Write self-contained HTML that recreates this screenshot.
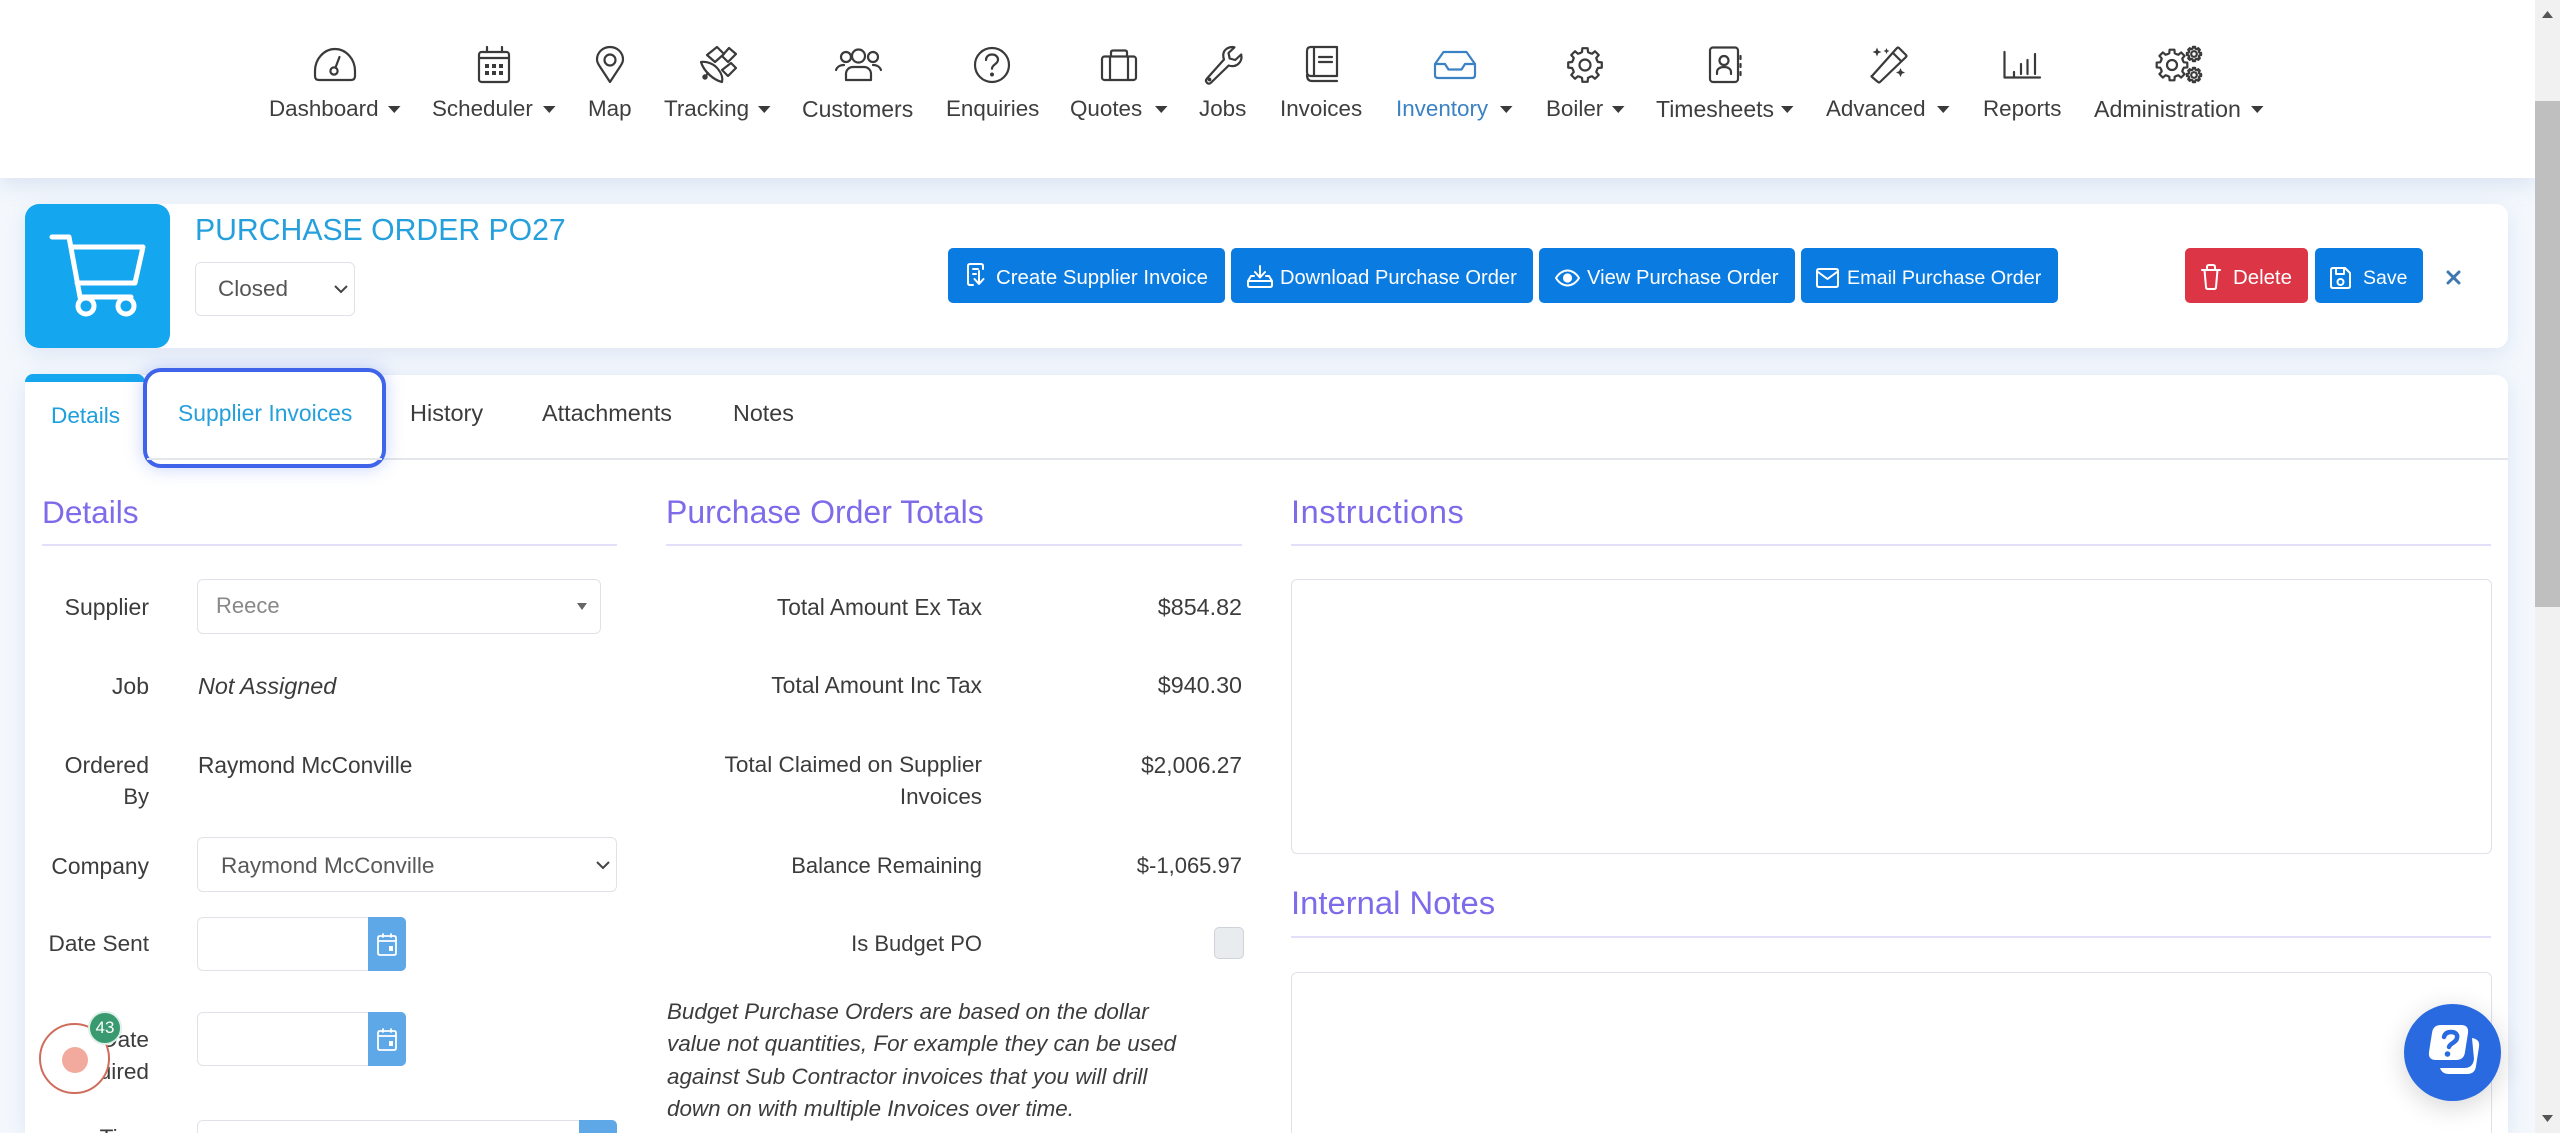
<!DOCTYPE html>
<html><head><meta charset="utf-8"><title>Purchase Order PO27</title>
<style>
html,body{margin:0;padding:0;width:2560px;height:1133px;overflow:hidden;background:#f4f8fd;font-family:"Liberation Sans",sans-serif}
#w{position:absolute;left:0;top:0;width:2560px;height:1133px;overflow:hidden;background:#f4f8fd}
.a{position:absolute}
.t{position:absolute;white-space:nowrap;font:22.6px/30px "Liberation Sans",sans-serif;color:#3c3c3c}
.r{text-align:right}
.n{top:94px;color:#3e3e3e;font-size:22.4px}
.nb{color:#3b82c4}
.h{font-size:31.6px;line-height:40px;color:#7d6bea;top:492px}
.u{position:absolute;height:2px;background:#e3dff9}
.box{position:absolute;background:#fff;border:1.5px solid #dfe3e9;border-radius:6px;box-sizing:border-box}
.btn{position:absolute;top:248px;height:55px;border-radius:5px;background:#0a7be0}
.bt{position:absolute;white-space:nowrap;top:263px;font:20.4px/30px "Liberation Sans",sans-serif;color:#fff}
.cal{position:absolute;background:#5fa8e8;border-radius:0 5px 5px 0}
svg{position:absolute;overflow:visible}
</style></head><body><div id="w">

<!-- NAV -->
<div class="a" style="left:0;top:0;width:2535px;height:178px;background:#fff;box-shadow:0 5px 22px rgba(110,140,190,.22)"></div>

<svg style="left:0;top:0" width="2560" height="178" fill="none" stroke="#3a3a3a" stroke-width="2.2" stroke-linecap="round" stroke-linejoin="round">
<defs>
<g id="gear"><g id="q"><polyline id="th" vector-effect="non-scaling-stroke" points="70.2,-29.1 76,-17.5 98.8,-15.6 98.8,15.6 76,17.5 70.2,29.1"/><use href="#th" transform="rotate(45)"/></g><use href="#q" transform="rotate(90)"/><use href="#q" transform="rotate(180)"/><use href="#q" transform="rotate(270)"/></g>
</defs>
<!-- dashboard -->
<path d="M319 80h32q4 0 4-4v-5c0-12-9-22-20-22s-20 10-20 22v5q0 4 4 4z"/><circle cx="334" cy="71" r="3.6"/><path d="M335.5 67.5L339.5 57"/>
<!-- scheduler -->
<rect x="479" y="52" width="30" height="30" rx="2.5"/><path d="M487 47v5M502 47v5M479 58h30"/>
<g fill="#3a3a3a" stroke="none"><rect x="485" y="64" width="4" height="4"/><rect x="492" y="64" width="4" height="4"/><rect x="499" y="64" width="4" height="4"/><rect x="485" y="71" width="4" height="4"/><rect x="492" y="71" width="4" height="4"/><rect x="499" y="71" width="4" height="4"/></g>
<!-- map -->
<path d="M610 82L599.5 66c-1.8-2.7-2.5-4.5-2.5-6.5C597 52.500 602.800 47 610 47s13 5.500 13 12.500c0 2-.7 3.800-2.500 6.500z"/><circle cx="610" cy="60" r="5.500"/>
<!-- tracking satellite -->
<path d="M707 55l10-8 7 7-9 8zM722 56l7-8 7 6-8 8zM731 63l5 5-8 8-6-6zM701 62c6-1 13 2 17 7s5 9 4 13c-8-2-18-10-21-20zM708 73l-3 4"/><circle cx="705" cy="77" r="1.6" fill="#3a3a3a"/>
<!-- customers -->
<circle cx="846" cy="57" r="5"/><circle cx="858.500" cy="56" r="6.500"/><circle cx="873" cy="57" r="5"/>
<path d="M836 70c1-3 4-5 8-5M881 70c-1-3-4-5-8-5M846 80v-6c0-4 3-7 7-7h11c4 0 7 3 7 7v6z"/>
<!-- enquiries -->
<circle cx="992" cy="65" r="17"/><path d="M986 60c0-3.500 2.700-5.500 6-5.500s6 2 6 5.200c0 4.500-6 4.500-6 9"/><circle cx="992" cy="74.500" r=".9" fill="#3a3a3a"/>
<!-- quotes -->
<rect x="1102" y="56.500" width="34" height="23.500" rx="2.500"/><path d="M1111 56.500V52.500q0-2 2-2h12q2 0 2 2v4M1110 56.500V80M1128 56.500V80"/>
<!-- jobs wrench -->
<path d="M1207 78.500l17-19c-1.800-5.500 0-9 3-11 2.500-1.500 5-1.800 7.500-1.200l-6 5.700 1.200 5.500 5.500 1.500 6-5.500c.8 3.500 0 7-3 9.500-2.800 2.300-6 2.700-9.500 1.500l-17.500 17c-1.500 1.500-3 1.500-4.200.3-1.300-1.200-1.300-2.800 0-4.300z"/><circle cx="1209.500" cy="79.500" r=".8" fill="#3a3a3a"/>
<!-- invoices book -->
<path d="M1337 47v29h-26q-4 0-4-4V51q0-4 4-4zM1314 47v29M1307 75q0 6 5 6h25M1319 57h13M1319 62h13"/>
<!-- inventory -->
<g stroke="#3b82c4"><path d="M1435 64l8.500-12h23l8.500 12v11q0 3-3 3h-34q-3 0-3-3zM1435 64h10l3.500 5.500h13l3.500-5.500h10"/></g>
<!-- boiler -->
<use href="#gear" transform="translate(1585 65) scale(.17)"/><circle cx="1585" cy="65" r="5.500"/>
<!-- timesheets -->
<rect x="1710" y="47.500" width="28" height="34.500" rx="3"/><circle cx="1724" cy="60.500" r="4.500"/><path d="M1717 74v-2c0-3 3-5 7-5s7 2 7 5v2M1740.500 56v3M1740.500 64v3M1740.500 72v3" />
<!-- advanced wand -->
<path d="M1872 76l25-28q1-1 2 0l7 7q1 1 0 2l-26 25q-1 1-2 0l-6-5q-1-1 0-1zM1893 53l8 8"/>
<g fill="#3a3a3a" stroke="none"><path d="M1877 47.500l1.300 3.200 3.200 1.300-3.200 1.300-1.300 3.200-1.300-3.200-3.200-1.300 3.200-1.300zM1886.500 48l.9 2.100 2.100.9-2.100.9-.9 2.100-.9-2.100-2.100-.9 2.100-.9zM1900.500 68l1.400 3.100 3.100 1.400-3.100 1.400-1.400 3.100-1.400-3.100-3.100-1.400 3.100-1.400z"/></g>
<!-- reports -->
<path d="M2004.500 52v25.500h35.500M2014 72v5M2021 64v10M2027.500 60v14M2035 54v20"/>
<!-- administration -->
<use href="#gear" transform="translate(2172 65) scale(.155)"/><circle cx="2172" cy="65" r="5"/>
<use href="#gear" transform="translate(2194 54) scale(.072)"/><circle cx="2194" cy="54" r="2.800"/>
<use href="#gear" transform="translate(2194 75) scale(.072)"/><circle cx="2194" cy="75" r="2.800"/>
<!-- carets -->
<g fill="#3a3a3a" stroke="none">
<path d="M388 106h12.500l-6.250 7z"/><path d="M543 106h12.500l-6.250 7z"/><path d="M758 106h12.500l-6.250 7z"/><path d="M1155 106h12.500l-6.250 7z"/>
<path d="M1500 106h12.500l-6.250 7z"/><path d="M1612 106h12.500l-6.250 7z"/><path d="M1781 106h12.500l-6.250 7z"/><path d="M1937 106h12.500l-6.250 7z"/><path d="M2251 106h12.500l-6.250 7z"/>
</g>
</svg>

<div class="t n" style="left:269px">Dashboard</div>
<div class="t n" style="left:432px">Scheduler</div>
<div class="t n" style="left:588px">Map</div>
<div class="t n" style="left:664px">Tracking</div>
<div class="t n" style="left:802px;font-size:23px">Customers</div>
<div class="t n" style="left:946px">Enquiries</div>
<div class="t n" style="left:1070px">Quotes</div>
<div class="t n" style="left:1199px">Jobs</div>
<div class="t n" style="left:1280px">Invoices</div>
<div class="t n nb" style="left:1396px">Inventory</div>
<div class="t n" style="left:1546px">Boiler</div>
<div class="t n" style="left:1656px;font-size:23px">Timesheets</div>
<div class="t n" style="left:1826px">Advanced</div>
<div class="t n" style="left:1983px">Reports</div>
<div class="t n" style="left:2094px;font-size:23.2px">Administration</div>

<!-- HEADER CARD -->
<div class="a" style="left:25px;top:204px;width:2483px;height:144px;background:#fff;border-radius:12px;box-shadow:0 6px 22px rgba(120,150,200,.18)"></div>
<div class="a" style="left:25px;top:204px;width:145px;height:144px;background:#14a6ef;border-radius:14px"></div>
<svg style="left:25px;top:204px" width="145" height="144" fill="none" stroke="#fff" stroke-width="5" stroke-linecap="round" stroke-linejoin="round">
<path d="M27 33H44L55 93H106M46 43H118L110 79H52"/>
<circle cx="61" cy="102" r="8"/><circle cx="101" cy="102" r="8"/>
</svg>
<div class="t" style="left:195px;top:211px;font-size:30.2px;line-height:40px;color:#25a0dc">PURCHASE ORDER PO27</div>
<div class="box" style="left:195px;top:262px;width:160px;height:54px"></div>
<div class="t" style="left:218px;top:274px;font-size:22.5px;color:#555">Closed</div>
<svg style="left:334px;top:285px" width="14" height="9" fill="none" stroke="#444" stroke-width="2"><path d="M1 1l6 6 6-6"/></svg>

<div class="btn" style="left:948px;width:277px"></div>
<div class="btn" style="left:1231px;width:302px"></div>
<div class="btn" style="left:1539px;width:256px"></div>
<div class="btn" style="left:1801px;width:257px"></div>
<div class="btn" style="left:2185px;width:123px;background:#dc3545"></div>
<div class="btn" style="left:2315px;width:108px"></div>
<div class="bt" style="left:996px">Create Supplier Invoice</div>
<div class="bt" style="left:1280px;font-size:20.1px">Download Purchase Order</div>
<div class="bt" style="left:1587px;font-size:20.2px">View Purchase Order</div>
<div class="bt" style="left:1847px;font-size:19.75px">Email Purchase Order</div>
<div class="bt" style="left:2233px">Delete</div>
<div class="bt" style="left:2363px;font-size:19.5px">Save</div>
<svg style="left:0;top:240px" width="2560" height="70" fill="none" stroke="#fff" stroke-width="2" stroke-linecap="round" stroke-linejoin="round">
<path transform="translate(0,-240)" d="M968 283v-17q0-2 2-2h11q2 0 2 2v3M973 269h5M973 274h3M979 271v11M974.500 279l4.500 5 4.500-5M968 283q0 2 2 2h3"/>
<path transform="translate(0,-240)" d="M1260 266v11M1255 272l5 5.500 5-5.500M1254 276h-3l-3 5v4q0 2 2 2h20q2 0 2-2v-4l-3-5h-3M1248 281h24"/>
<path transform="translate(0,-240)" d="M1556 278c3-5 7.500-7.500 11.500-7.500s8.500 2.500 11.500 7.500c-3 5-7.500 7.500-11.500 7.500s-8.500-2.500-11.500-7.500z"/><circle cx="1567.500" cy="38" r="3.600" fill="#fff"/>
<path transform="translate(0,-240)" d="M1819 269h17q2 0 2 2v14q0 2-2 2h-17q-2 0-2-2v-14q0-2 2-2zM1818 272l9.500 7 9.500-7"/>
<path transform="translate(0,-240)" d="M2202 270h18M2207 270v-3q0-2 2-2h4q2 0 2 2v3M2204.500 270l1.500 17q0 2 2 2h6q2 0 2-2l1.500-17"/>
<path transform="translate(0,-240)" d="M2333 268h12l5 5v13q0 2-2 2h-15q-2 0-2-2v-16q0-2 2-2zM2336 268v6h8v-6M2336 288"/><circle cx="2340.500" cy="42" r="3"/>
<path transform="translate(0,-240)" d="M2448 272l11 11M2459 272l-11 11" stroke="#3f78b0" stroke-width="3"/>
</svg>

<!-- MAIN CARD -->
<div class="a" style="left:25px;top:375px;width:2483px;height:758px;background:#fff;border-radius:12px 12px 0 0;box-shadow:0 4px 22px rgba(120,150,200,.18)"></div>
<div class="a" style="left:25px;top:374px;width:120px;height:8px;background:#14a6ef;border-radius:10px 10px 0 0"></div>
<div class="a" style="left:145px;top:457.500px;width:2363px;height:2px;background:#e3e6ea"></div>

<!-- highlight -->
<div class="a" style="left:143px;top:368px;width:243px;height:100px;box-sizing:border-box;border:4.500px solid #3f64ea;border-radius:18px;background:#fff;box-shadow:0 0 18px rgba(70,110,240,.3)"></div>
<div class="a" style="left:147px;top:457.500px;width:235px;height:2px;background:#e3e6ea"></div>

<div class="t" style="left:51px;top:401px;color:#1c9fdc">Details</div>
<div class="t" style="left:178px;top:398px;color:#25a0dc;font-size:22.9px">Supplier Invoices</div>
<div class="t" style="left:410px;top:398px;font-size:23.5px">History</div>
<div class="t" style="left:542px;top:398px;font-size:23.4px">Attachments</div>
<div class="t" style="left:733px;top:398px;font-size:23.3px">Notes</div>

<!-- column headings -->
<div class="t h" style="left:42px">Details</div><div class="u" style="left:42px;top:544px;width:575px"></div>
<div class="t h" style="left:666px;font-size:32px">Purchase Order Totals</div><div class="u" style="left:666px;top:544px;width:576px"></div>
<div class="t h" style="left:1291px;font-size:32.5px;letter-spacing:.6px">Instructions</div><div class="u" style="left:1291px;top:544px;width:1200px"></div>
<div class="t h" style="left:1291px;top:883px;font-size:32.8px">Internal Notes</div><div class="u" style="left:1291px;top:936px;width:1200px"></div>

<!-- details col -->
<div class="t r" style="right:2411px;top:592px;font-size:23px">Supplier</div>
<div class="box" style="left:197px;top:579px;width:404px;height:55px"></div>
<div class="t" style="left:216px;top:591px;color:#888;font-size:22px">Reece</div>
<svg style="left:577px;top:603px" width="10" height="7"><path d="M0 0h10L5 7z" fill="#666"/></svg>

<div class="t r" style="right:2411px;top:671px;font-size:23px">Job</div>
<div class="t" style="left:198px;top:671px;font-style:italic;font-size:23.4px">Not Assigned</div>

<div class="t r" style="right:2411px;top:750px;font-size:23px">Ordered</div>
<div class="t r" style="right:2411px;top:782px;font-size:22px">By</div>
<div class="t" style="left:198px;top:750px;font-size:22.7px">Raymond McConville</div>

<div class="t r" style="right:2411px;top:851px;font-size:22.8px">Company</div>
<div class="box" style="left:197px;top:837px;width:420px;height:55px"></div>
<div class="t" style="left:221px;top:851px;color:#585858">Raymond McConville</div>
<svg style="left:596px;top:861px" width="14" height="9" fill="none" stroke="#444" stroke-width="2"><path d="M1 1l6 6 6-6"/></svg>

<div class="t r" style="right:2411px;top:929px">Date Sent</div>
<div class="box" style="left:197px;top:917px;width:209px;height:54px"></div>
<div class="cal" style="left:368px;top:917px;width:38px;height:54px"></div>

<div class="t r" style="right:2411px;top:1025px">Date</div>
<div class="t r" style="right:2411px;top:1057px">Required</div>
<div class="box" style="left:197px;top:1012px;width:209px;height:54px"></div>
<div class="cal" style="left:368px;top:1012px;width:38px;height:54px"></div>

<svg style="left:0;top:0" width="420" height="1133" fill="none" stroke="#fff" stroke-width="1.800" stroke-linecap="round" stroke-linejoin="round">
<path d="M380 936h14q2 0 2 2v15q0 2-2 2h-14q-2 0-2-2v-15q0-2 2-2zM378 941h18M383 934v3M391 934v3"/><rect x="389" y="946" width="4" height="5" fill="#fff" stroke="none"/>
<path d="M380 1031h14q2 0 2 2v15q0 2-2 2h-14q-2 0-2-2v-15q0-2 2-2zM378 1036h18M383 1029v3M391 1029v3"/><rect x="389" y="1041" width="4" height="5" fill="#fff" stroke="none"/>
</svg>

<div class="t r" style="right:2411px;top:1123px">Time</div>
<div class="box" style="left:197px;top:1120px;width:420px;height:40px"></div>
<div class="cal" style="left:579px;top:1120px;width:38px;height:40px;border-radius:0 5px 0 0"></div>

<!-- recorder widget -->
<div class="a" style="left:39px;top:1023px;width:71px;height:71px;box-sizing:border-box;border:2.500px solid #cf6c5c;border-radius:50%;background:#fff"></div>
<div class="a" style="left:62px;top:1047px;width:26px;height:26px;border-radius:50%;background:#f1aa9d"></div>
<div class="a" style="left:88px;top:1011px;width:34px;height:34px;box-sizing:border-box;border:2px solid #dff0e8;border-radius:50%;background:#39996f"></div>
<div class="t" style="left:88px;top:1013px;width:34px;text-align:center;font-size:17px;color:#fff">43</div>

<!-- totals col -->
<div class="t r" style="right:1578px;top:592px;font-size:22.7px">Total Amount Ex Tax</div><div class="t r" style="right:1318px;top:592px;font-size:23.3px">$854.82</div>
<div class="t r" style="right:1578px;top:670px;font-size:22.9px">Total Amount Inc Tax</div><div class="t r" style="right:1318px;top:670px;font-size:23.3px">$940.30</div>
<div class="t r" style="right:1578px;top:750px;font-size:22.6px">Total Claimed on Supplier</div><div class="t r" style="right:1318px;top:750px;font-size:22.7px">$2,006.27</div>
<div class="t r" style="right:1578px;top:782px;font-size:22.4px">Invoices</div>
<div class="t r" style="right:1578px;top:851px;font-size:22px">Balance Remaining</div><div class="t r" style="right:1318px;top:851px;font-size:22px">$-1,065.97</div>
<div class="t r" style="right:1578px;top:929px;font-size:22px">Is Budget PO</div>
<div class="a" style="left:1214px;top:927px;width:30px;height:32px;box-sizing:border-box;background:#e9ecef;border:1.500px solid #ced3d9;border-radius:5px"></div>
<div class="t" style="left:667px;top:997px;font-style:italic;font-size:22.4px">Budget Purchase Orders are based on the dollar</div>
<div class="t" style="left:667px;top:1029px;font-style:italic;font-size:22.5px">value not quantities, For example they can be used</div>
<div class="t" style="left:667px;top:1062px;font-style:italic;font-size:22.4px">against Sub Contractor invoices that you will drill</div>
<div class="t" style="left:667px;top:1094px;font-style:italic;font-size:22.4px">down on with multiple Invoices over time.</div>

<!-- textareas -->
<div class="box" style="left:1291px;top:579px;width:1201px;height:275px"></div>
<div class="box" style="left:1291px;top:972px;width:1201px;height:190px"></div>

<!-- help bubble -->
<div class="a" style="left:2404px;top:1004px;width:97px;height:97px;border-radius:50%;background:#2a6ae0;box-shadow:0 6px 26px rgba(0,0,0,.16)"></div>
<svg style="left:2404px;top:1004px" width="97" height="97">
<path d="M37 21h20q8 0 7 8l-3 19q-1 8-9 8H32q-8 0-7-8l3-19q1-8 9-8z" fill="#fff"/>
<path d="M68 34c5 1 8 3 7 9l-3 19q-1 8-9 8H45q-7 0-9-6h24q9 0 10-9z" fill="#fff"/>
<path d="M40 33c1-4 4-5 7-5 4 0 7 2 6 6-1 5-7 5-8 9" fill="none" stroke="#2a6ae0" stroke-width="4.500" stroke-linecap="round"/>
<circle cx="43.500" cy="50" r="2.800" fill="#2a6ae0"/>
</svg>

<!-- scrollbar -->
<div class="a" style="left:2535px;top:0;width:25px;height:1133px;background:#f1f1f1"></div>
<div class="a" style="left:2535px;top:101px;width:25px;height:506px;background:#bfbfbf"></div>
<svg style="left:2535px;top:0" width="25" height="1133"><path d="M7 18l5.500-7 5.500 7z" fill="#555"/><path d="M7 1115h11l-5.500 7z" fill="#555"/></svg>

</div></body></html>
